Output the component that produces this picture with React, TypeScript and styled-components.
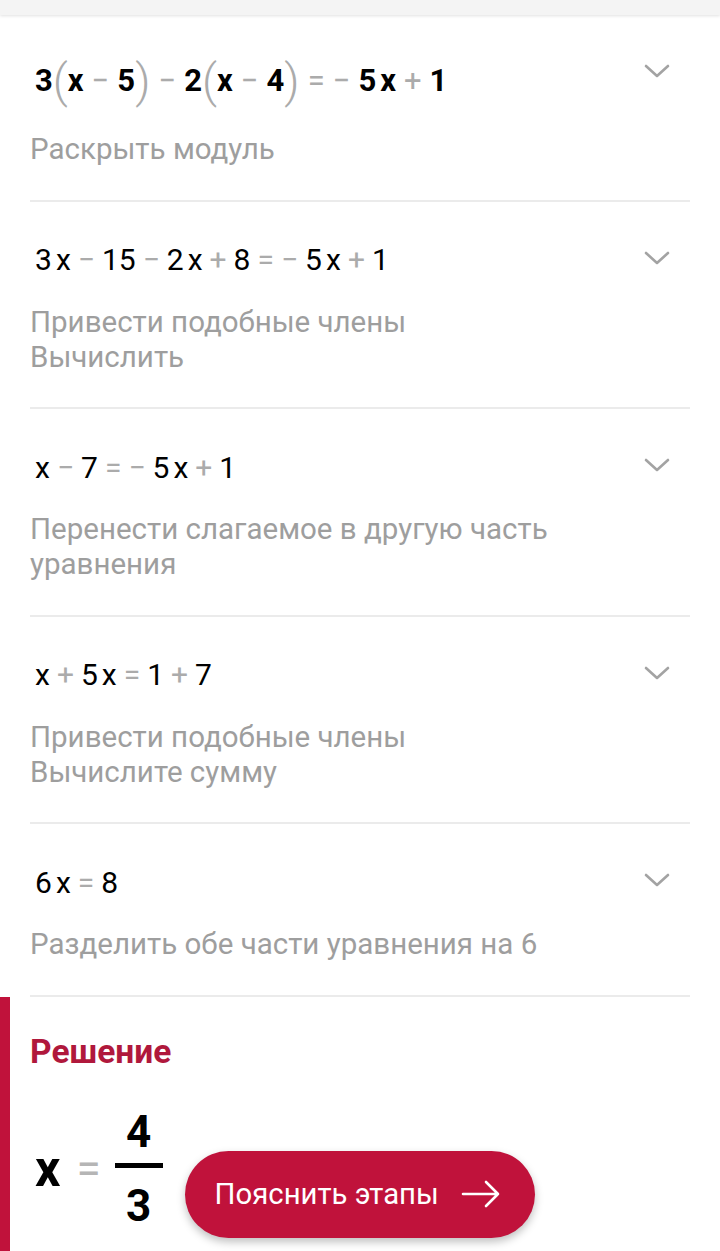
import React from "react";
import styled, { createGlobalStyle } from "styled-components";

const GlobalStyle = createGlobalStyle`
  html, body {
    margin: 0;
    padding: 0;
    background: #ffffff;
  }
  body {
    font-family: Roboto, "Noto Sans", "Liberation Sans", sans-serif;
    color: #000;
  }
  #root {
    min-height: 100vh;
    display: flex;
    flex-direction: column;
  }
`;

type Step = {
  eq: string;
  desc: string[];
  bold?: boolean;
};

const steps: Step[] = [
  {
    eq: "3 ( x − 5 ) − 2 ( x − 4 ) = − 5 x + 1",
    desc: ["Раскрыть модуль"],
    bold: true
  },
  {
    eq: "3 x − 15 − 2 x + 8 = − 5 x + 1",
    desc: ["Привести подобные члены", "Вычислить"]
  },
  {
    eq: "x − 7 = − 5 x + 1",
    desc: ["Перенести слагаемое в другую часть", "уравнения"]
  },
  {
    eq: "x + 5 x = 1 + 7",
    desc: ["Привести подобные члены", "Вычислите сумму"]
  },
  {
    eq: "6 x = 8",
    desc: ["Разделить обе части уравнения на 6"]
  }
];

const ops = ["−", "+", "="];

// splits "3 x − 15" into coloured tokens
const renderEq = (eq: string, bold?: boolean) => {
  const parts = eq.split(" ");
  const gap = bold ? 8 : 7;
  return parts.map((p, i) => {
    const prev = parts[i - 1];
    if (p === "(" || p === ")") {
      return <Paren key={i}>{p}</Paren>;
    }
    if (ops.includes(p)) {
      const afterOp = !!prev && ops.includes(prev);
      return (
        <Op key={i} gap={gap} afterOp={afterOp}>
          {p}
        </Op>
      );
    }
    const glued = p === "x" && !!prev && /^\d+$/.test(prev);
    return (
      <Term key={i} glued={glued}>
        {p}
      </Term>
    );
  });
};

const ChevronDown = () => (
  <svg width="26" height="14" viewBox="0 0 26 14">
    <path
      d="M2 2 L13 12 L24 2"
      fill="none"
      stroke="#a3a3a3"
      strokeWidth="2.6"
      strokeLinecap="round"
      strokeLinejoin="round"
    />
  </svg>
);

const ArrowRight = () => (
  <svg width="40" height="30" viewBox="0 0 40 30">
    <path
      d="M2 15 H37 M25 3 L37 15 L25 27"
      fill="none"
      stroke="#ffffff"
      strokeWidth="2.6"
      strokeLinecap="round"
      strokeLinejoin="round"
    />
  </svg>
);

export default function App() {
  return (
    <>
      <GlobalStyle />
      <TopBar />
      <StepList>
        {steps.map((s, i) => (
          <StepRow key={i}>
            <StepBody>
              <Equation bold={s.bold}>{renderEq(s.eq, s.bold)}</Equation>
              <Desc>
                {s.desc.map((d, j) => (
                  <div key={j}>{d}</div>
                ))}
              </Desc>
            </StepBody>
            <ChevronBox>
              <ChevronDown />
            </ChevronBox>
          </StepRow>
        ))}
      </StepList>
      <Solution>
        <SolutionTitle>Решение</SolutionTitle>
        <ResultRow>
          <Answer>
            <AnswerVar>x</AnswerVar>
            <AnswerEq>=</AnswerEq>
            <Fraction>
              <FracNum>4</FracNum>
              <FracBar />
              <FracNum>3</FracNum>
            </Fraction>
          </Answer>
          <ExplainButton>
            <span>Пояснить этапы</span>
            <ArrowRight />
          </ExplainButton>
        </ResultRow>
      </Solution>
    </>
  );
}

const TopBar = styled.div`
  height: 15px;
  background: #f4f4f4;
  box-shadow: 0 1px 3px rgba(0, 0, 0, 0.12);
  position: relative;
  z-index: 1;
`;

const StepList = styled.div`
  display: flex;
  flex-direction: column;
`;

const StepRow = styled.div`
  display: flex;
  margin: 0 30px;
  padding: 38px 0 32.5px;
  border-bottom: 2px solid #ebebeb;
`;

const StepBody = styled.div`
  flex: 1;
  display: flex;
  flex-direction: column;
`;

const Equation = styled.div<{ bold?: boolean }>`
  display: flex;
  align-items: center;
  padding-left: 5px;
  height: ${p => (p.bold ? "54px" : "40px")};
  font-size: ${p => (p.bold ? "31px" : "30px")};
  font-weight: ${p => (p.bold ? 700 : 400)};
  color: #000;
`;

const Term = styled.span<{ glued?: boolean }>`
  margin-left: ${p => (p.glued ? "4px" : "0")};
`;

const Op = styled.span<{ gap: number; afterOp?: boolean }>`
  color: #ababab;
  font-weight: 400;
  margin: 0 ${p => p.gap}px 0 ${p => (p.afterOp ? 0 : p.gap)}px;
`;

const Paren = styled.span`
  color: #ababab;
  font-size: 47px;
  font-weight: 300;
  line-height: 1;
`;

const Desc = styled.div`
  margin-top: 25px;
  font-size: 29.5px;
  line-height: 35px;
  color: #9e9e9e;
`;

const ChevronBox = styled.div`
  margin: 10px 20px 0 0;
  height: 14px;
`;

const Solution = styled.div`
  flex: 1;
  border-left: 10px solid #c0123b;
  padding: 35px 0 0 20px;
  display: flex;
  flex-direction: column;
`;

const SolutionTitle = styled.div`
  font-size: 33.5px;
  font-weight: 700;
  line-height: 40px;
  color: #b0183c;
`;

const ResultRow = styled.div`
  display: flex;
  align-items: flex-start;
  margin-top: 35px;
`;

const Answer = styled.div`
  display: flex;
  align-items: center;
  padding-left: 5px;
`;

const AnswerVar = styled.span`
  font-size: 50px;
  font-weight: 700;
  line-height: 1;
`;

const AnswerEq = styled.span`
  font-size: 44px;
  color: #b5b5b5;
  margin: 0 14px 0 16px;
  line-height: 1;
`;

const Fraction = styled.div`
  display: flex;
  flex-direction: column;
  align-items: center;
`;

const FracNum = styled.span`
  font-size: 44px;
  font-weight: 700;
  line-height: 50px;
`;

const FracBar = styled.div`
  width: 48px;
  height: 5px;
  background: #000;
  margin: 6px 0 13px;
`;

const ExplainButton = styled.button`
  display: flex;
  align-items: center;
  gap: 22px;
  margin: 44px 0 0 22px;
  width: 350px;
  height: 87px;
  padding: 0 0 0 30px;
  border: none;
  border-radius: 44px;
  background: #c0123b;
  color: #fff;
  font-family: Roboto, "Noto Sans", sans-serif;
  font-size: 29.3px;
  box-shadow: 0 4px 8px rgba(0, 0, 0, 0.25);
`;
